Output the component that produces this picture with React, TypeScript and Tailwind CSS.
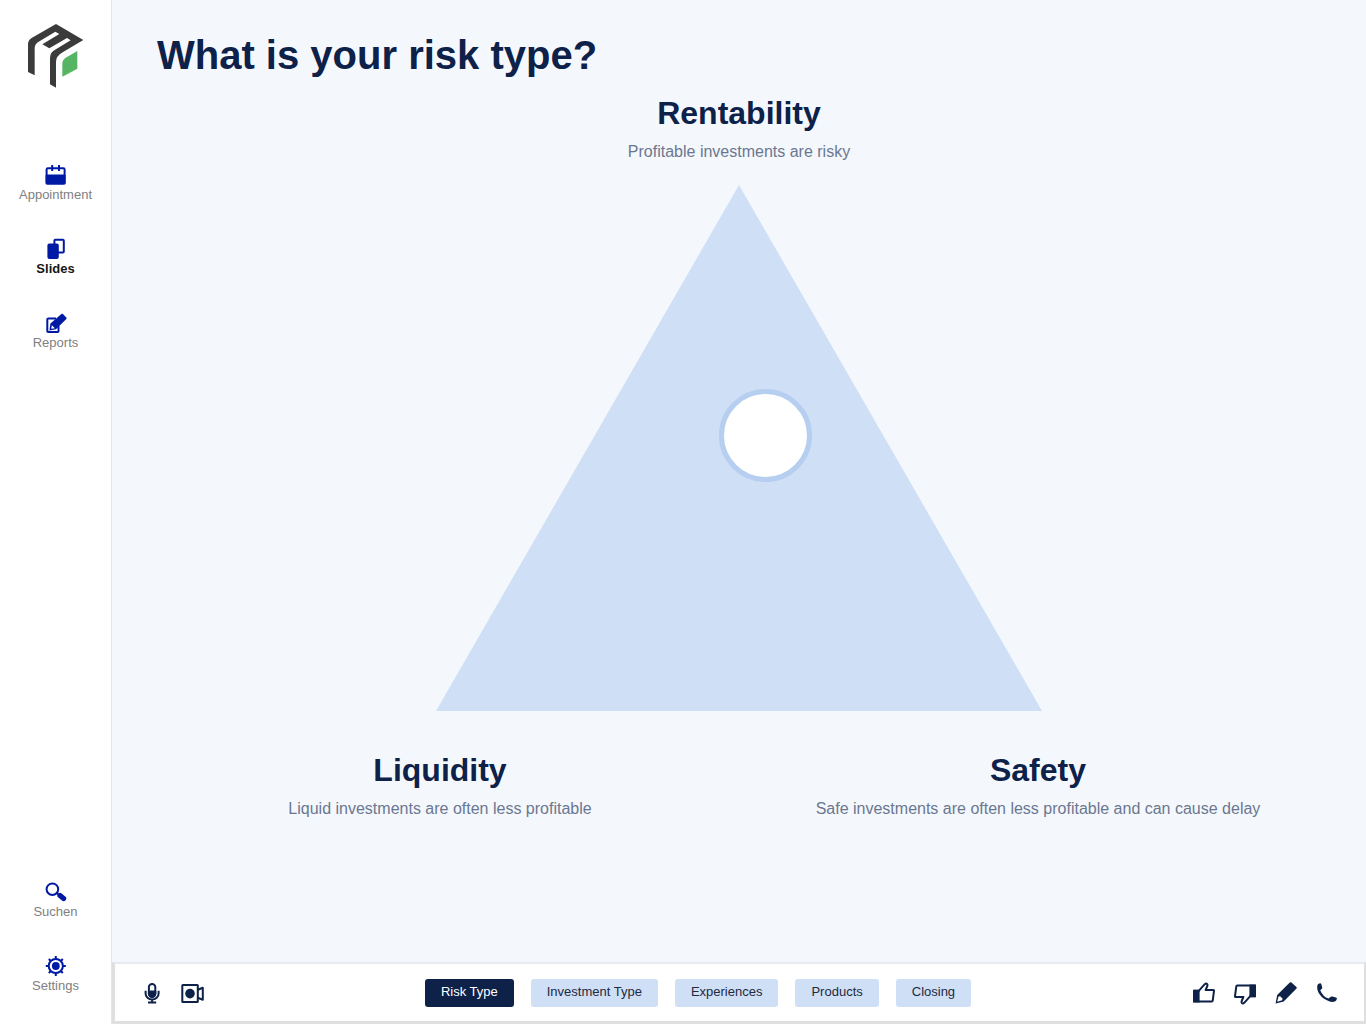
import type { ReactNode } from "react"
import clsx from "clsx"

function Icon({ children }: { children: ReactNode }) {
    return (
        <svg
            viewBox="0 0 24 24"
            className="w-6 h-6 shrink-0"
            fill="none"
            stroke="currentColor"
            strokeWidth="2"
            strokeLinejoin="round"
            aria-hidden="true"
        >
            {children}
        </svg>
    )
}

function Logo() {
    return (
        <svg viewBox="84 72 168 192" className="w-14 h-16" role="img" aria-label="Home">
            <path
                fill="#3b3b3c"
                d="M168 72 L250 120 L188 157 Q168 168 168 186 V263 L150 253 V174 Q150 158 164 150 L212 121 L201 114 L148 145 L127 133 L178 102 L166 95 L116 125 Q104 132 104 144 V226 L84 216 V132 Q84 120 96 113 Z"
            />
            <path fill="#56b562" d="M232 153 V206 L187 230 V191 Q187 179 197 173 Z" />
        </svg>
    )
}

const mainNav = [
    {
        label: "Appointment",
        icon: (
            <Icon>
                <rect x="2.6" y="5.2" width="18" height="15.2" rx="1.2" />
                <path d="M2.6 12.4h18v8h-18z" fill="currentColor" />
                <path d="M8.2 2v6M15 2v6" />
            </Icon>
        ),
    },
    {
        label: "Slides",
        active: true,
        icon: (
            <Icon>
                <rect x="10.4" y="2.8" width="9.4" height="12.6" rx="1" />
                <rect x="3.4" y="6.5" width="11.4" height="15.5" rx="2" fill="currentColor" stroke="none" />
            </Icon>
        ),
    },
    {
        label: "Reports",
        icon: (
            <Icon>
                <path d="M12 7.6H4.2q-.9 0-.9.8v11.8q0 .8.9.8h9.4q.9 0 .9-.8V15" />
                <path
                    d="M5.4 19.6l1-7L17.4 3q.8-.6 1.5.1l3.4 3.5q.7.8 0 1.5L12 18.2z"
                    fill="currentColor"
                    stroke="none"
                />
                <path d="M7.2 17.8l.7-3.6 2.9 3z" fill="#fff" stroke="none" />
            </Icon>
        ),
    },
]

const footerNav = [
    {
        label: "Suchen",
        icon: (
            <Icon>
                <circle cx="8.4" cy="9.2" r="5.8" />
                <path d="M12.6 13l2.5 2" />
                <path d="M16 15.6l3.6 2.9" strokeWidth="5.2" strokeLinecap="round" />
            </Icon>
        ),
    },
    {
        label: "Settings",
        icon: (
            <Icon>
                <circle cx="11.8" cy="12" r="7.1" />
                <circle cx="11.8" cy="12" r="3.9" fill="currentColor" stroke="none" />
                <path d="M11.8 2v3M11.8 19v3M1.8 12h3M18.8 12h3M4.8 5l2 2M16.8 17l2 2M18.8 5l-2 2M6.8 17l-2 2" />
            </Icon>
        ),
    },
]

type NavItem = { label: string; icon: ReactNode; active?: boolean }

function NavList({ items }: { items: NavItem[] }) {
    return (
        <ul className="flex flex-col gap-[34px]">
            {items.map((item) => (
                <li key={item.label}>
                    <a href="#" className="flex flex-col items-center text-[#0019a5]">
                        {item.icon}
                        <span
                            className={clsx(
                                "text-[13px] leading-4",
                                item.active ? "font-bold text-[#161616]" : "text-[#808080]"
                            )}
                        >
                            {item.label}
                        </span>
                    </a>
                </li>
            ))}
        </ul>
    )
}

function Sidebar() {
    return (
        <nav className="w-28 shrink-0 flex flex-col justify-between bg-white border-r border-[#e1e6ee] pt-6 pb-[30px]">
            <div className="flex flex-col gap-[75px]">
                <a href="#" className="self-center">
                    <Logo />
                </a>
                <NavList items={mainNav} />
            </div>
            <NavList items={footerNav} />
        </nav>
    )
}

function Corner({ title, text }: { title: string; text: string }) {
    return (
        <div className="flex flex-col gap-[7px] text-center">
            <h2 className="text-[32px] leading-10 font-bold text-[#0d2149]">{title}</h2>
            <p className="text-base text-[#6b7790]">{text}</p>
        </div>
    )
}

function RiskTriangle() {
    return (
        <div className="mt-[14px] flex flex-col items-center px-[29px]">
            <Corner title="Rentability" text="Profitable investments are risky" />
            <svg viewBox="0 0 606 526" className="w-full max-w-[606px] mt-[21px]" role="img" aria-label="Risk triangle">
                <path d="M303 0L606 526H0z" fill="#cfdff5" />
                <circle cx="329.5" cy="250.5" r="44" fill="#fff" stroke="#b6cef0" strokeWidth="5" />
            </svg>
            <div className="w-full grid grid-cols-2 mt-[39px]">
                <Corner title="Liquidity" text="Liquid investments are often less profitable" />
                <Corner title="Safety" text="Safe investments are often less profitable and can cause delay" />
            </div>
        </div>
    )
}

const steps = ["Risk Type", "Investment Type", "Experiences", "Products", "Closing"]

function Thumb() {
    return (
        <>
            <path d="M1 8.8h6.6v12.6H1z" fill="currentColor" stroke="none" />
            <path d="M7.2 9.4l5.6-6.2q1.4-1.2 2.4 0 .6.8.1 1.8l-1.7 4h7.7q.8 0 .7.8l-1.3 9.8q-.1.8-.9.8H2V9.8h5.2z" />
        </>
    )
}

function Toolbar() {
    return (
        <footer className="flex items-center justify-between bg-white border-t-2 border-r-2 border-b-3 border-l-3 border-[#dfdfdf] border-t-[#e7eaf2] px-[25px] h-[62px] text-[#0d2149]">
            <div className="flex gap-4">
                <button aria-label="Microphone">
                    <Icon>
                        <rect x="8.9" y="2.9" width="6.4" height="13" rx="3.2" />
                        <path d="M8.9 10.4h6.4v2.2a3.2 3.2 0 0 1-6.4 0z" fill="currentColor" />
                        <path d="M5.6 9.8v2.6a6.5 6.2 0 0 0 13 0V9.8M12.1 18.8v2.8M8 21.6h8.2" />
                    </Icon>
                </button>
                <button aria-label="Record video">
                    <Icon>
                        <rect x="2.3" y="4" width="15.5" height="17" rx=".6" />
                        <circle cx="10" cy="12.6" r="4.8" fill="currentColor" stroke="none" />
                        <path d="M17.8 8.8l5-2v12l-5-2" />
                    </Icon>
                </button>
            </div>
            <div className="flex gap-[17px]">
                {steps.map((step, i) => (
                    <button
                        key={step}
                        className={clsx(
                            "h-7 px-4 pb-0.5 rounded-[3px] text-[13px] leading-4 whitespace-nowrap",
                            i === 0 ? "bg-[#0d2149] text-white" : "bg-[#cfdff5] text-[#1d2a42]"
                        )}
                    >
                        {step}
                    </button>
                ))}
            </div>
            <div className="flex gap-[17px]">
                <button aria-label="Like">
                    <Icon>
                        <Thumb />
                    </Icon>
                </button>
                <button aria-label="Dislike">
                    <Icon>
                        <g transform="rotate(180 12 12.5)">
                            <Thumb />
                        </g>
                    </Icon>
                </button>
                <button aria-label="Draw">
                    <Icon>
                        <path
                            d="M1.6 22.6l1.6-8.6L15.8 1.6q.9-.7 1.7 0l4.9 4.3q.8.8.1 1.6L10.2 20q-.5.5-1.2.8z"
                            fill="currentColor"
                            stroke="none"
                        />
                        <path d="M3.2 20.8l1.3-5.4 1.6-.2 2.4 2.4-.3 1.6z" fill="#fff" stroke="none" />
                    </Icon>
                </button>
                <button aria-label="Call">
                    <Icon>
                        <path
                            d="M2.2 5Q2.6 2.4 5 2.2q1.2 0 1.4 1l.8 3.6q.1.8-.6 1.2L5.2 9.2q2.8 6.6 8.4 8.400l2.200-1.800q.6-.5 1.400-.3l3.800 1q1 .3.9 1.200-.4 2-2.100 2.900-3.600 1.200-8.400-1.600Q5.600 16.200 3.200 11 1.800 8 2.200 5z"
                            fill="currentColor"
                            stroke="none"
                        />
                    </Icon>
                </button>
            </div>
        </footer>
    )
}

export default function App() {
    return (
        <div className="min-h-screen flex bg-[#f4f8fd] font-['Liberation_Sans',Arial,sans-serif]">
            <Sidebar />
            <div className="flex-1 min-w-0 flex flex-col">
                <main className="flex-1 pt-[31px]">
                    <h1 className="px-[45px] text-[40px] leading-12 font-bold text-[#0d2149]">
                        What is your risk type?
                    </h1>
                    <RiskTriangle />
                </main>
                <Toolbar />
            </div>
        </div>
    )
}
